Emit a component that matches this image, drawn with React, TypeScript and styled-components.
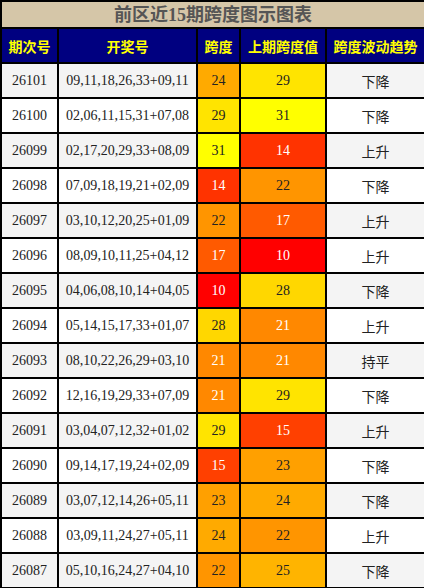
import React from 'react';
import styled, { createGlobalStyle } from 'styled-components';

const GlobalStyle = createGlobalStyle`
  html, body {
    margin: 0;
    padding: 0;
    background: #ffffff;
  }
`;

const Table = styled.table`
  width: 424px;
  border-collapse: collapse;
  table-layout: fixed;
  font-family: 'Liberation Serif', 'Noto Sans CJK SC', serif;
  font-size: 14px;
  color: #222;
`;

const TitleCell = styled.th`
  height: 25px;
  padding: 0;
  background: #d5c6a8;
  border: 2px solid #000;
  color: #555;
  font-size: 18px;
  font-weight: bold;
  text-align: center;
  line-height: 24px;
`;

const HeadCell = styled.th`
  height: 33px;
  padding: 0;
  background: #000080;
  border: 2px solid #000;
  color: #ffff00;
  font-family: 'Noto Sans CJK SC', sans-serif;
  font-size: 14px;
  font-weight: bold;
  text-align: center;
`;

const Cell = styled.td<{ $bg?: string; $light?: boolean; $sans?: boolean }>`
  height: 33px;
  padding: 0;
  border: 2px solid #000;
  text-align: center;
  background: ${({ $bg }) => $bg || 'transparent'};
  color: ${({ $light }) => ($light ? '#fff' : '#222')};
  font-family: ${({ $sans }) =>
    $sans ? "'Noto Sans CJK SC', sans-serif" : "'Liberation Serif', 'Noto Sans CJK SC', serif"};
  font-size: 14px;
`;

const Row = styled.tr<{ $odd: boolean }>`
  background: ${({ $odd }) => ($odd ? '#f4f4f4' : '#ffffff')};
`;

const spanColors: Record<number, string> = {
  10: '#ff0000',
  14: '#ff3300',
  15: '#ff4000',
  17: '#ff5a00',
  21: '#ff8800',
  22: '#ff9500',
  23: '#ffa000',
  24: '#ffaa00',
  25: '#ffb400',
  28: '#ffd700',
  29: '#ffe400',
  31: '#ffff00',
};

const rows: [string, string, number, number, string][] = [
  ['26101', '09,11,18,26,33+09,11', 24, 29, '下降'],
  ['26100', '02,06,11,15,31+07,08', 29, 31, '下降'],
  ['26099', '02,17,20,29,33+08,09', 31, 14, '上升'],
  ['26098', '07,09,18,19,21+02,09', 14, 22, '下降'],
  ['26097', '03,10,12,20,25+01,09', 22, 17, '上升'],
  ['26096', '08,09,10,11,25+04,12', 17, 10, '上升'],
  ['26095', '04,06,08,10,14+04,05', 10, 28, '下降'],
  ['26094', '05,14,15,17,33+01,07', 28, 21, '上升'],
  ['26093', '08,10,22,26,29+03,10', 21, 21, '持平'],
  ['26092', '12,16,19,29,33+07,09', 21, 29, '下降'],
  ['26091', '03,04,07,12,32+01,02', 29, 15, '上升'],
  ['26090', '09,14,17,19,24+02,09', 15, 23, '下降'],
  ['26089', '03,07,12,14,26+05,11', 23, 24, '下降'],
  ['26088', '03,09,11,24,27+05,11', 24, 22, '上升'],
  ['26087', '05,10,16,24,27+04,10', 22, 25, '下降'],
];

const SpanCell = ({ value }: { value: number }) => (
  <Cell $bg={spanColors[value]} $light={value <= 21}>
    {value}
  </Cell>
);

const App = () => (
  <>
    <GlobalStyle />
    <Table>
      <colgroup>
        <col style={{ width: 57 }} />
        <col style={{ width: 139 }} />
        <col style={{ width: 43 }} />
        <col style={{ width: 86 }} />
        <col style={{ width: 99 }} />
      </colgroup>
      <thead>
        <tr>
          <TitleCell colSpan={5}>前区近15期跨度图示图表</TitleCell>
        </tr>
        <tr>
          <HeadCell>期次号</HeadCell>
          <HeadCell>开奖号</HeadCell>
          <HeadCell>跨度</HeadCell>
          <HeadCell>上期跨度值</HeadCell>
          <HeadCell>跨度波动趋势</HeadCell>
        </tr>
      </thead>
      <tbody>
        {rows.map(([issue, nums, span, prev, trend], i) => (
          <Row key={issue} $odd={i % 2 === 0}>
            <Cell>{issue}</Cell>
            <Cell>{nums}</Cell>
            <SpanCell value={span} />
            <SpanCell value={prev} />
            <Cell $sans>{trend}</Cell>
          </Row>
        ))}
      </tbody>
    </Table>
  </>
);

export default App;
